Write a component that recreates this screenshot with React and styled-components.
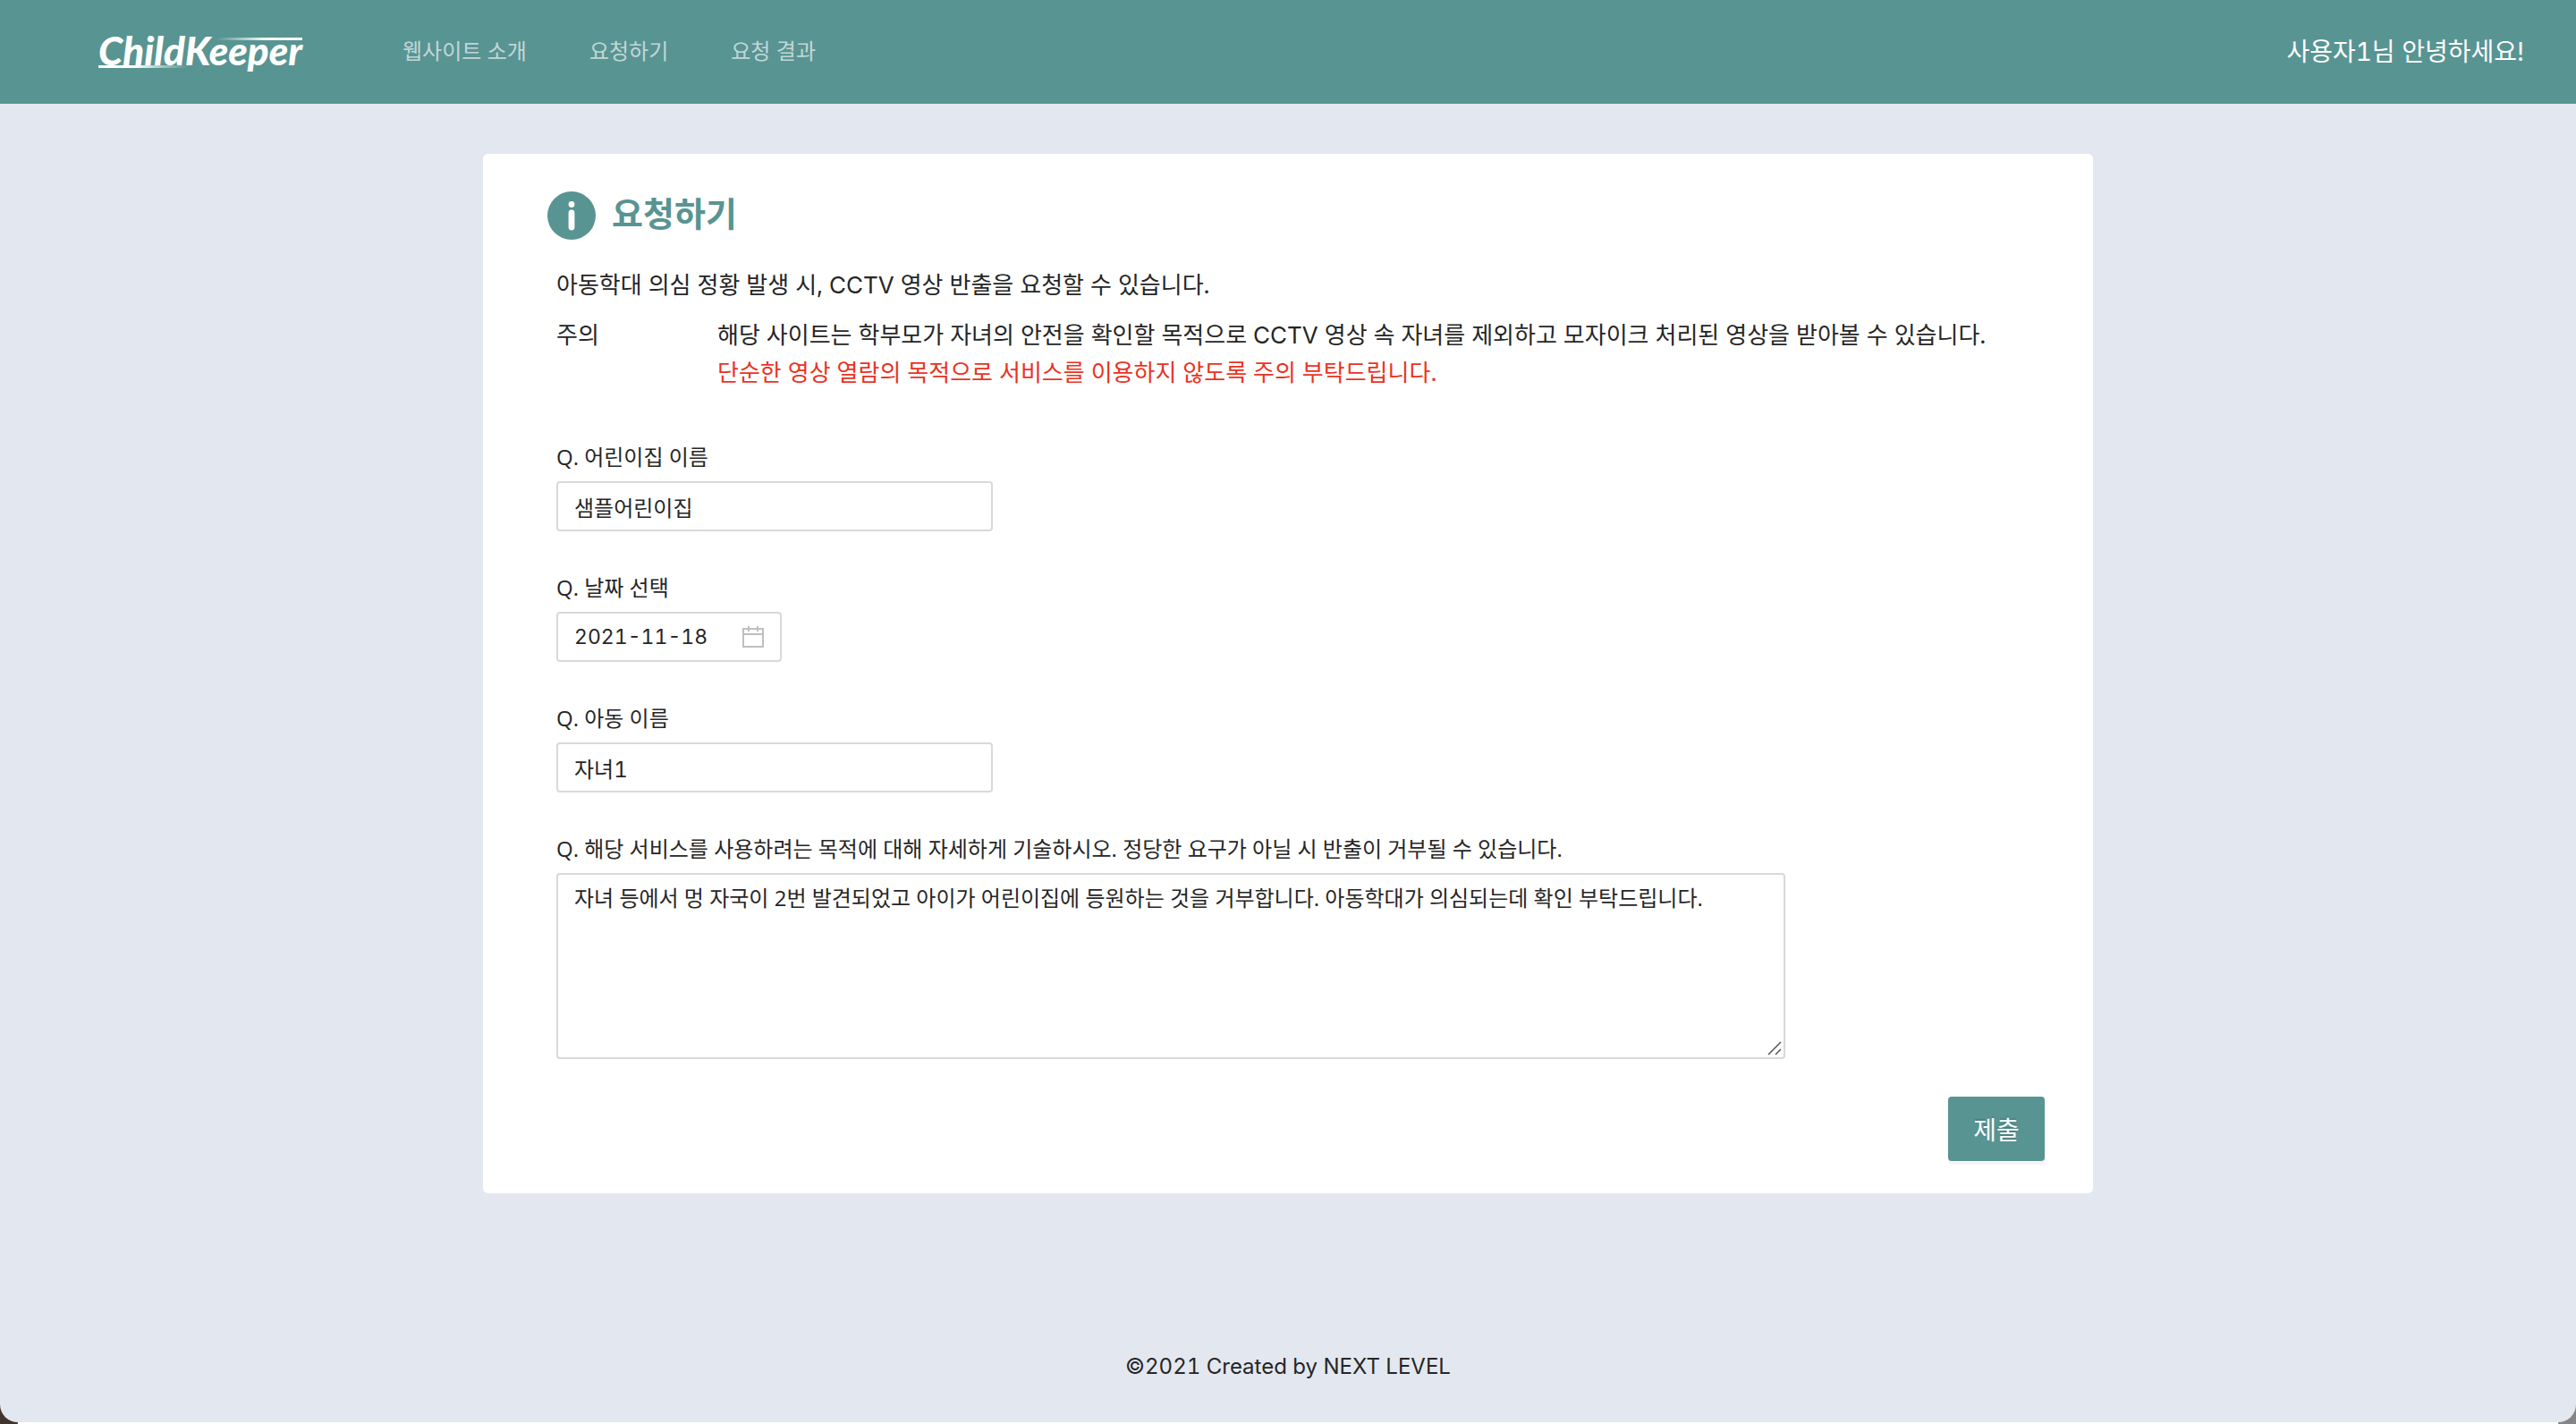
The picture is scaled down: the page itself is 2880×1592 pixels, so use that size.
import React from "react";
import styled, { createGlobalStyle } from "styled-components";

const teal = "#589492";
const ink = "#262626";
const sans = `Inter, "Noto Sans CJK KR", sans-serif`;
const formSans = `"Open Sans", "Noto Sans CJK KR", sans-serif`;

const GlobalStyle = createGlobalStyle`
  *, *::before, *::after { box-sizing: border-box; }
  body {
    margin: 0;
    background: linear-gradient(90deg, #43332f 20px, #fff 20px, #fff calc(100% - 20px), #858585 calc(100% - 20px));
    color: ${ink};
    font-family: ${sans};
    font-size: 24px;
    font-weight: 399;
    font-variant-numeric: tabular-nums;
    line-height: 36px;
  }
  input, textarea, button {
    font-weight: 399;
    font-variant-numeric: tabular-nums;
  }
`;

const Page = styled.div`
  display: flex;
  flex-direction: column;
  min-height: calc(100vh - 2px);
  background: #e3e8f0;
  border-radius: 0 0 20px 20px;
  overflow: hidden;
`;

const Header = styled.header`
  display: flex;
  align-items: center;
  height: 116px;
  padding: 0 58px 0 110px;
  background: ${teal};
  color: #fff;
`;

const Logo = styled.a`
  position: relative;
  width: 228px;
  height: 44px;
  margin-right: 112px;
  color: #fff;
  font: italic 900 44px/40px Lato, sans-serif;
  text-decoration: none;
  &::before, &::after {
    content: "";
    position: absolute;
    height: 3px;
  }
  &::before {
    top: 6px;
    right: 0;
    width: 96px;
    background: linear-gradient(90deg, transparent, #fff 60%);
  }
  &::after {
    bottom: 4px;
    left: 0;
    width: 100px;
    background: linear-gradient(270deg, transparent, #fff 60%);
  }
`;

const Nav = styled.nav`
  display: flex;
  flex: 1;
  gap: 70px;
`;

const NavLink = styled.a`
  color: rgba(255, 255, 255, 0.65);
  text-decoration: none;
`;

const Greeting = styled.span`
  font-size: 28px;
`;

const Card = styled.main`
  width: 62.5%;
  margin: 56px auto 0;
  padding: 42px 54px 36px 72px;
  border-radius: 6px;
  background: #fff;
`;

const TitleRow = styled.div`
  display: flex;
  align-items: flex-start;
  gap: 18px;
`;

const Title = styled.h1`
  margin: 0;
  color: ${teal};
  font-size: 38px;
  line-height: 50px;
  font-weight: 600;
`;

const Body = styled.div`
  padding: 30px 0 0 10px;
`;

const Intro = styled.p`
  margin: 0 0 14px;
  font-size: 26px;
  line-height: 42px;
`;

const Notice = styled.dl`
  display: grid;
  grid-template-columns: 180px 1fr;
  margin: 0 0 54px;
  font-size: 26px;
  line-height: 42px;
`;

const NoticeTerm = styled.dt``;

const NoticeText = styled.dd`
  margin: 0;
`;

const Warning = styled.strong`
  display: block;
  color: #ea3323;
  font-weight: inherit;
`;

const Field = styled.div`
  display: flex;
  flex-direction: column;
  align-items: flex-start;
  gap: 8px;
  margin-bottom: ${(p) => (p.$last ? 42 : 44)}px;
`;

const Label = styled.label`
  font-family: ${formSans};
  line-height: 38px;
`;

const box = `
  border: 2px solid #d9d9d9;
  border-radius: 4px;
  background: #fff;
  color: ${ink};
  font-family: ${sans};
  font-size: 24px;
`;

const TextInput = styled.input`
  ${box}
  width: 488px;
  height: 56px;
  padding: 0 18px;
`;

const DateBox = styled.div`
  ${box}
  display: flex;
  align-items: center;
  width: 252px;
  height: 56px;
  padding: 0 18px;
`;

const DateInput = styled.input`
  flex: 1;
  min-width: 0;
  padding: 0;
  border: 0;
  outline: 0;
  background: transparent;
  color: ${ink};
  font-family: ${sans};
  font-size: 23px;
`;

const TextAreaWrap = styled.div`
  position: relative;
  width: 1374px;
  max-width: 100%;
`;

const TextArea = styled.textarea`
  ${box}
  display: block;
  width: 100%;
  height: 208px;
  padding: 6px 18px;
  font-family: ${formSans};
  line-height: 40px;
  resize: none;
`;

const Grip = styled.svg`
  position: absolute;
  right: 4px;
  bottom: 4px;
  pointer-events: none;
`;

const Actions = styled.div`
  display: flex;
  justify-content: flex-end;
`;

const SubmitButton = styled.button`
  width: 108px;
  height: 72px;
  padding: 0;
  border: 0;
  border-radius: 4px;
  background: ${teal};
  box-shadow: 0 4px 0 rgba(0, 0, 0, 0.04);
  color: #fff;
  font-family: ${sans};
  font-size: 28px;
  text-shadow: 0 -2px 0 rgba(0, 0, 0, 0.12);
`;

const Footer = styled.footer`
  margin-top: auto;
  padding: 46px 0 44px;
  text-align: center;
`;

const InfoIcon = () => (
  <svg width="54" height="54" viewBox="0 0 54 54" aria-hidden="true">
    <circle cx="27" cy="27" r="27" fill={teal} />
    <circle cx="27" cy="14.5" r="3.4" fill="#fff" />
    <rect x="23.6" y="20.5" width="6.8" height="23" rx="3.4" fill="#fff" />
  </svg>
);

const CalendarIcon = () => (
  <svg width="24" height="24" viewBox="0 0 24 24" fill="none" stroke="#bfbfbf" strokeWidth="2" aria-hidden="true">
    <rect x="1" y="3" width="22" height="20" />
    <path d="M1 9h22M7 0v6M17 0v6" />
  </svg>
);

export default function App() {
  return (
    <>
      <GlobalStyle />
      <Page>
        <Header>
          <Logo href="#">ChildKeeper</Logo>
          <Nav>
            <NavLink href="#about">웹사이트 소개</NavLink>
            <NavLink href="#request">요청하기</NavLink>
            <NavLink href="#result">요청 결과</NavLink>
          </Nav>
          <Greeting>사용자1님 안녕하세요!</Greeting>
        </Header>
        <Card>
          <TitleRow>
            <InfoIcon />
            <Title>요청하기</Title>
          </TitleRow>
          <Body>
            <Intro>아동학대 의심 정황 발생 시, CCTV 영상 반출을 요청할 수 있습니다.</Intro>
            <Notice>
              <NoticeTerm>주의</NoticeTerm>
              <NoticeText>
                해당 사이트는 학부모가 자녀의 안전을 확인할 목적으로 CCTV 영상 속 자녀를 제외하고 모자이크 처리된 영상을 받아볼 수 있습니다.
                <Warning>단순한 영상 열람의 목적으로 서비스를 이용하지 않도록 주의 부탁드립니다.</Warning>
              </NoticeText>
            </Notice>
            <Field>
              <Label htmlFor="center">Q. 어린이집 이름</Label>
              <TextInput id="center" defaultValue="샘플어린이집" />
            </Field>
            <Field>
              <Label htmlFor="date">Q. 날짜 선택</Label>
              <DateBox>
                <DateInput id="date" defaultValue="2021-11-18" />
                <CalendarIcon />
              </DateBox>
            </Field>
            <Field>
              <Label htmlFor="child">Q. 아동 이름</Label>
              <TextInput id="child" defaultValue="자녀1" />
            </Field>
            <Field $last>
              <Label htmlFor="reason">
                Q. 해당 서비스를 사용하려는 목적에 대해 자세하게 기술하시오. 정당한 요구가 아닐 시 반출이 거부될 수 있습니다.
              </Label>
              <TextAreaWrap>
                <TextArea
                  id="reason"
                  defaultValue="자녀 등에서 멍 자국이 2번 발견되었고 아이가 어린이집에 등원하는 것을 거부합니다. 아동학대가 의심되는데 확인 부탁드립니다."
                />
                <Grip width="16" height="16" viewBox="0 0 16 16" stroke="#555" strokeWidth="1.5" aria-hidden="true">
                  <path d="M1 15L15 1M9 15l6-6" />
                </Grip>
              </TextAreaWrap>
            </Field>
          </Body>
          <Actions>
            <SubmitButton type="submit">제출</SubmitButton>
          </Actions>
        </Card>
        <Footer>©2021 Created by NEXT LEVEL</Footer>
      </Page>
    </>
  );
}
